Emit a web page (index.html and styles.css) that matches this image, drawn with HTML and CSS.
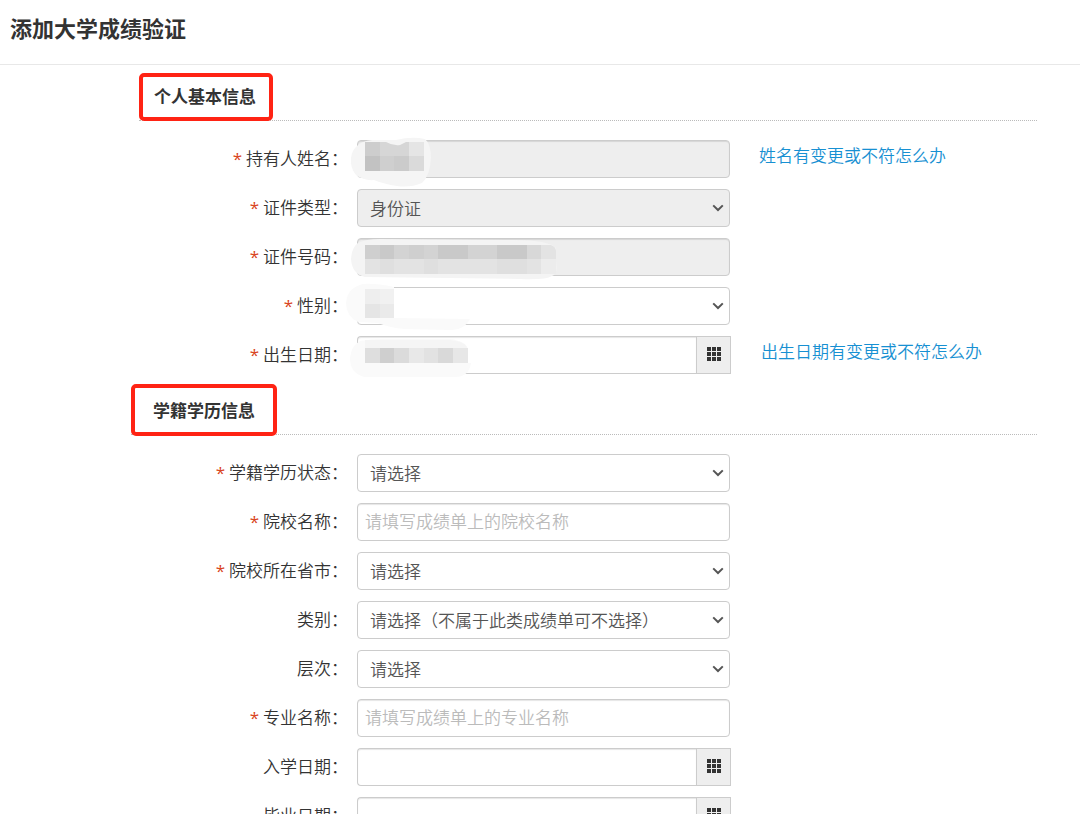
FILE: index.html
```html
<!DOCTYPE html>
<html lang="zh-CN">
<head>
    <meta charset="UTF-8">
    <meta name="viewport" content="width=device-width, initial-scale=1.0">
    <title>添加大学成绩验证</title>
    <link rel="stylesheet" href="styles.css">
</head>
<body>

<svg class="sprite" aria-hidden="true">
    <symbol id="icon-arrow" viewBox="0 0 12 8">
        <path d="M1.2 1.4 L6 6 L10.8 1.4" fill="none" stroke="#555" stroke-width="2"/>
    </symbol>
    <symbol id="icon-grid" viewBox="0 0 14 14">
        <path d="M0 0h4v4h-4z M5 0h4v4h-4z M10 0h4v4h-4z M0 5h4v4h-4z M5 5h4v4h-4z M10 5h4v4h-4z M0 10h4v4h-4z M5 10h4v4h-4z M10 10h4v4h-4z" fill="#333"/>
    </symbol>
</svg>

<header class="page-header">
    <h1>添加大学成绩验证</h1>
</header>

<form class="verify-form">
    <section>
        <div class="section-title section-title-inset">
            <h2 class="marked">个人基本信息</h2>
        </div>
        <div class="row">
            <label for="name"><span class="required">*</span> 持有人姓名：</label>
            <div class="control">
                <input type="text" id="name" disabled>
                <svg class="mask" viewBox="345 136 220 52" aria-hidden="true">
                    <path d="M357 146 Q362 141 372 140 L396 140 Q412 136 425 139 Q431 144 431 158 Q430 176 422 183 Q410 188 397 186 Q384 184 374 180 Q364 181 356 175 Q350 168 351 158 Q352 150 357 146Z" fill="#f5f5f5"/>
                    <path d="M365 142H380V156H365z" fill="#cdcdcd"/>
                    <path d="M380 142H386Q393 146 400 145L406 142H409V156H380z" fill="#d6d6d6"/>
                    <path d="M409 142H424V156H409z" fill="#e5e5e5"/>
                    <path d="M365 156H380V171H365z" fill="#c2c2c2"/>
                    <path d="M380 156H394V171H380z" fill="#cfcfcf"/>
                    <path d="M394 156H409V171H394z" fill="#cbcbcb"/>
                    <path d="M409 156H424V171H409z" fill="#dadada"/>
                </svg>
            </div>
            <a class="help" href="#">姓名有变更或不符怎么办</a>
        </div>
        <div class="row">
            <label for="idType"><span class="required">*</span> 证件类型：</label>
            <div class="control">
                <select id="idType" disabled><option>身份证</option></select>
                <svg class="arrow"><use href="#icon-arrow"/></svg>
            </div>
        </div>
        <div class="row">
            <label for="idNumber"><span class="required">*</span> 证件号码：</label>
            <div class="control">
                <input type="text" id="idNumber" disabled>
                <svg class="mask" viewBox="345 234 220 52" aria-hidden="true">
                    <path d="M358 243 Q366 239 380 239 L505 240 Q548 239 556 248 V262 Q558 274 552 276 Q546 280 520 279 L365 277 Q352 274 351 259 Q352 247 358 243Z" fill="#f4f4f4"/>
                    <path d="M365 245H380V259H365z M409 245H424V259H409z" fill="#cfcfcf"/>
                    <path d="M380 245H394V259H380z M438 245H468V259H438z M497 245H527V259H497z" fill="#c9c9c9"/>
                    <path d="M394 245H409V259H394z M424 245H438V259H424z M468 245H497V259H468z" fill="#d3d3d3"/>
                    <path d="M527 245H541V259H527z" fill="#d8d8d8"/>
                    <path d="M541 245H551Q556 247 556 251V259H541z" fill="#e3e3e3"/>
                    <path d="M365 259H541V274H365z" fill="#e3e3e3"/>
                    <path d="M380 259H394V274H380z M424 259H438V274H424z M497 259H527V274H497z" fill="#dfdfdf"/>
                    <path d="M541 259H556V274H541z" fill="#ececec"/>
                </svg>
            </div>
        </div>
        <div class="row">
            <label for="gender"><span class="required">*</span> 性别：</label>
            <div class="control">
                <select id="gender"><option></option></select>
                <svg class="arrow"><use href="#icon-arrow"/></svg>
                <svg class="mask" viewBox="345 283 220 52" aria-hidden="true">
                    <path d="M363 284 Q375 283 394 287 V318 L470 319 Q464 330 452 330 L405 329 Q390 328 378 323 L358 322 Q346 316 346 303 Q347 288 363 284Z" fill="#fafafa"/>
                    <path d="M365 289H380V304H365z" fill="#eeeeee"/>
                    <path d="M380 289H394V304H380z" fill="#f1f1f1"/>
                    <path d="M365 304H380V318H365z" fill="#e5e5e5"/>
                    <path d="M380 304H394V318H380z" fill="#eaeaea"/>
                </svg>
            </div>
        </div>
        <div class="row">
            <label for="birthday"><span class="required">*</span> 出生日期：</label>
            <div class="control date">
                <input type="text" id="birthday">
                <button type="button" aria-label="选择日期"><svg><use href="#icon-grid"/></svg></button>
                <svg class="mask" viewBox="345 332 220 52" aria-hidden="true">
                    <path d="M360 341 Q370 339 385 339 H450 Q467 341 468 350 V363 H471 Q469 377 455 377 H364 Q350 373 350 358 Q351 346 360 341Z" fill="#fafafa"/>
                    <path d="M365 340H450Q466 342 467 348H365z" fill="#f5f5f5"/>
                    <path d="M365 348H380V363H365z" fill="#dedede"/>
                    <path d="M380 348H394V363H380z" fill="#cfcfcf"/>
                    <path d="M394 348H409V363H394z" fill="#dbdbdb"/>
                    <path d="M409 348H424V363H409z" fill="#e8e8e8"/>
                    <path d="M424 348H438V363H424z" fill="#e2e2e2"/>
                    <path d="M438 348H453V363H438z" fill="#d9d9d9"/>
                    <path d="M453 348H468V363H453z" fill="#e7e7e7"/>
                </svg>
            </div>
            <a class="help" href="#">出生日期有变更或不符怎么办</a>
        </div>
    </section>

    <section>
        <div class="section-title">
            <h2 class="marked marked-large">学籍学历信息</h2>
        </div>
        <div class="row">
            <label for="status"><span class="required">*</span> 学籍学历状态：</label>
            <div class="control">
                <select id="status"><option>请选择</option></select>
                <svg class="arrow"><use href="#icon-arrow"/></svg>
            </div>
        </div>
        <div class="row">
            <label for="school"><span class="required">*</span> 院校名称：</label>
            <div class="control">
                <input type="text" id="school" placeholder="请填写成绩单上的院校名称">
            </div>
        </div>
        <div class="row">
            <label for="province"><span class="required">*</span> 院校所在省市：</label>
            <div class="control">
                <select id="province"><option>请选择</option></select>
                <svg class="arrow"><use href="#icon-arrow"/></svg>
            </div>
        </div>
        <div class="row">
            <label for="category">类别：</label>
            <div class="control">
                <select id="category"><option>请选择（不属于此类成绩单可不选择）</option></select>
                <svg class="arrow"><use href="#icon-arrow"/></svg>
            </div>
        </div>
        <div class="row">
            <label for="level">层次：</label>
            <div class="control">
                <select id="level"><option>请选择</option></select>
                <svg class="arrow"><use href="#icon-arrow"/></svg>
            </div>
        </div>
        <div class="row">
            <label for="major"><span class="required">*</span> 专业名称：</label>
            <div class="control">
                <input type="text" id="major" placeholder="请填写成绩单上的专业名称">
            </div>
        </div>
        <div class="row">
            <label for="enrollDate">入学日期：</label>
            <div class="control date">
                <input type="text" id="enrollDate">
                <button type="button" aria-label="选择日期"><svg><use href="#icon-grid"/></svg></button>
            </div>
        </div>
        <div class="row">
            <label for="gradDate">毕业日期：</label>
            <div class="control date">
                <input type="text" id="gradDate">
                <button type="button" aria-label="选择日期"><svg><use href="#icon-grid"/></svg></button>
            </div>
        </div>
    </section>
</form>

</body>
</html>
```
FILE: styles.css
```css
* {
    box-sizing: border-box;
}
body {
    margin: 0;
    background-color: #fff;
    color: #333;
    font-family: "Noto Sans CJK SC", sans-serif;
    font-size: 17px;
    font-weight: 350;
    line-height: 24px;
}
.sprite {
    display: none;
}
.page-header {
    padding: 11px 10px 21px;
    border-bottom: 1px solid #e8e8e8;
}
h1 {
    margin: 0;
    font-size: 22px;
    line-height: 32px;
}
.verify-form {
    margin: 0 43px 0 131px;
    padding-top: 8px;
}
.section-title {
    display: flex;
    margin-bottom: 19px;
    border-bottom: 1px dotted #bbb;
}
.section-title-inset {
    margin-left: 8px;
}
h2 {
    margin: 0;
    font-size: 17px;
    line-height: 24px;
}
/* red frame that sits on the dotted line */
.marked {
    margin: 0 0 -1px;
    padding: 7px 13px 9px 11px;
    border: 4px solid #ff2314;
    border-radius: 5px;
}
.marked-large {
    margin: -1px 0 -2px;
    padding: 10px 18px;
}
.row {
    display: grid;
    grid-template-columns: 217px minmax(0, 382px) auto;
    justify-content: start;
    margin-bottom: 11px;
}
.row label {
    padding-top: 6px;
    text-align: right;
}
.required {
    color: #d9441c;
    font-family: "Open Sans", sans-serif;
    font-weight: 400;
}
.control {
    position: relative;
    margin-left: 9px;
}
input,
select {
    display: block;
    width: 100%;
    height: 38px;
    margin: 0;
    padding: 0 8px;
    border: 1px solid #ccc;
    border-radius: 4px;
    background-color: #fff;
    color: #555;
    font: inherit;
}
input {
    padding: 0 7px 3px;
    box-shadow: inset 0 1px 1px rgba(0, 0, 0, 0.1);
}
select {
    padding: 0 30px 0 12px;
    appearance: none;
}
input:disabled,
select:disabled {
    background-color: #eee;
    color: #555;
    opacity: 1;
}
input::placeholder {
    color: #bbb;
}
.arrow {
    position: absolute;
    top: 15px;
    right: 6px;
    width: 12px;
    height: 8px;
    pointer-events: none;
}
.date {
    display: flex;
    margin-right: -1px;
}
.date input {
    flex: 1;
    min-width: 0;
    border-right: 0;
    border-radius: 4px 0 0 4px;
}
.date button {
    width: 35px;
    height: 38px;
    padding: 0 0 3px;
    border: 1px solid #ccc;
    background-color: #eee;
}
.date button svg {
    display: block;
    width: 14px;
    height: 14px;
    margin: 0 auto;
}
/* mosaic hiding personal data */
.mask {
    position: absolute;
    top: -4px;
    left: -12px;
    width: 220px;
    height: 52px;
    overflow: visible;
    pointer-events: none;
}
.help {
    margin-left: 29px;
    padding-top: 3px;
    color: #1790d2;
    text-decoration: none;
}
.date + .help {
    margin-left: 31px;
}
```
